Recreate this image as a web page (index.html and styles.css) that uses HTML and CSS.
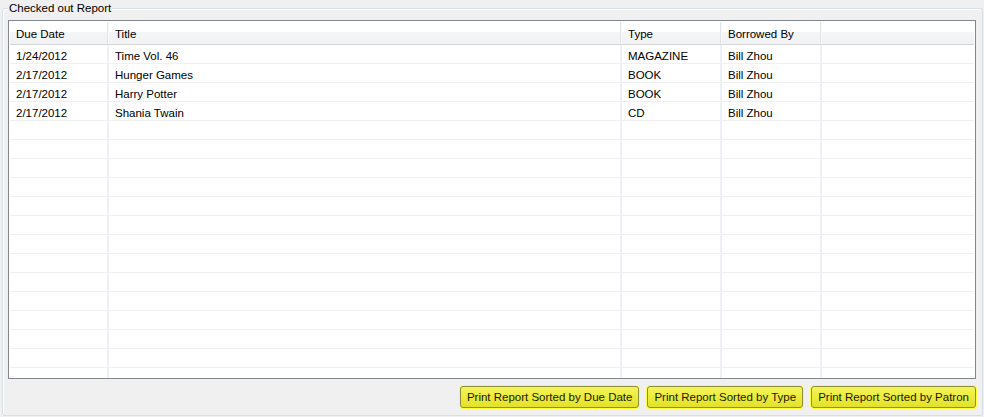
FILE: index.html
```html
<!DOCTYPE html>
<html>
<head>
<meta charset="utf-8">
<link rel="stylesheet" href="styles.css">
</head>
<body>
<div class="group">
  <div class="group-title">Checked out Report</div>
  <div class="grid">
    <table class="report">
      <colgroup>
        <col class="c-date"><col class="c-title"><col class="c-type"><col class="c-by"><col class="c-rest">
      </colgroup>
      <thead>
        <tr><th>Due Date</th><th>Title</th><th>Type</th><th>Borrowed By</th><th></th></tr>
      </thead>
      <tbody>
        <tr><td>1/24/2012</td><td>Time Vol. 46</td><td>MAGAZINE</td><td>Bill Zhou</td><td></td></tr>
        <tr><td>2/17/2012</td><td>Hunger Games</td><td>BOOK</td><td>Bill Zhou</td><td></td></tr>
        <tr><td>2/17/2012</td><td>Harry Potter</td><td>BOOK</td><td>Bill Zhou</td><td></td></tr>
        <tr><td>2/17/2012</td><td>Shania Twain</td><td>CD</td><td>Bill Zhou</td><td></td></tr>
        <tr><td></td><td></td><td></td><td></td><td></td></tr>
        <tr><td></td><td></td><td></td><td></td><td></td></tr>
        <tr><td></td><td></td><td></td><td></td><td></td></tr>
        <tr><td></td><td></td><td></td><td></td><td></td></tr>
        <tr><td></td><td></td><td></td><td></td><td></td></tr>
        <tr><td></td><td></td><td></td><td></td><td></td></tr>
        <tr><td></td><td></td><td></td><td></td><td></td></tr>
        <tr><td></td><td></td><td></td><td></td><td></td></tr>
        <tr><td></td><td></td><td></td><td></td><td></td></tr>
        <tr><td></td><td></td><td></td><td></td><td></td></tr>
        <tr><td></td><td></td><td></td><td></td><td></td></tr>
        <tr><td></td><td></td><td></td><td></td><td></td></tr>
        <tr><td></td><td></td><td></td><td></td><td></td></tr>
        <tr><td></td><td></td><td></td><td></td><td></td></tr>
        <tr><td></td><td></td><td></td><td></td><td></td></tr>
      </tbody>
    </table>
  </div>
  <div class="actions">
    <button class="btn">Print Report Sorted by Due Date</button>
    <button class="btn">Print Report Sorted by Type</button>
    <button class="btn">Print Report Sorted by Patron</button>
  </div>
</div>
</body>
</html>
```
FILE: styles.css
```css
html, body {
  margin: 0;
  padding: 0;
}
body {
  width: 984px;
  height: 417px;
  background: #f0f0f0;
  font-family: "Liberation Sans", Arial, sans-serif;
  font-size: 11.5px;
  color: #000;
  overflow: hidden;
}
.group {
  box-sizing: border-box;
  margin: 8px 1px 0 2px;
  height: 408px;
  border: 1px solid #d5dfe5;
  border-radius: 3px;
  box-shadow: inset 1px 1px 0 #fff;
  padding: 0 6px 0 5px;
}
.group-title {
  width: fit-content;
  margin: -8px 0 0 0;
  padding: 0 1px;
  line-height: 15px;
  background: #f0f0f0;
}
.grid {
  box-sizing: border-box;
  margin-top: 4px;
  height: 359px;
  border: 1px solid #828790;
  padding: 1px;
  background: #fff;
  overflow: hidden;
}
.report {
  table-layout: fixed;
  border-collapse: separate;
  border-spacing: 0;
  width: 964px;
}
.c-date { width: 99px; }
.c-title { width: 513px; }
.c-type { width: 100px; }
.c-by { width: 100px; }
.c-rest { width: 152px; }
.report th {
  box-sizing: border-box;
  height: 23px;
  padding: 2px 0 0 6px;
  text-align: left;
  font-weight: normal;
  white-space: nowrap;
  background: linear-gradient(#ffffff 0, #ffffff 45%, #f4f5f7 45%, #f1f2f4 100%);
  border-bottom: 1px solid #d5d5d5;
  box-shadow: inset -1px 0 0 #fafafa, inset -2px 0 0 #e3e4e6;
}
.report th:last-child {
  box-shadow: none;
}
.report td {
  box-sizing: border-box;
  height: 19px;
  padding: 4px 0 0 6px;
  white-space: nowrap;
  border-bottom: 1px solid #f0f0f0;
  border-right: 2px solid #edf1f7;
}
.report td:last-child {
  border-right: none;
}
.actions {
  display: flex;
  justify-content: flex-end;
  gap: 8px;
  margin-top: 7px;
}
.btn {
  box-sizing: border-box;
  height: 22px;
  padding: 0 6px;
  font-family: inherit;
  font-size: 11.5px;
  color: #1a1a00;
  border: 1px solid #8d8d3a;
  border-radius: 3px;
  background: linear-gradient(#f4f45c, #ecec3c 50%, #e2e22a);
  box-shadow: 0 0 0 1px #ffff3c;
}
```
